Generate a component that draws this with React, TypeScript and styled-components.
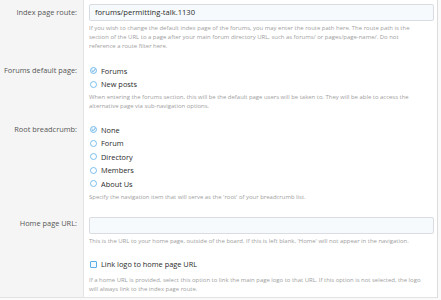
import React from "react";
import styled, { createGlobalStyle } from "styled-components";

const Global = createGlobalStyle`
  html, body { margin: 0; padding: 0; background: #fafafa; }
  body { font-family: "Open Sans", "Noto Sans", sans-serif; }
`;

const Page = styled.div`
  width: 441px;
  height: 300px;
  overflow: hidden;
  background: #fafafa;
`;

const Form = styled.div`
  width: 438px;
  border-right: 1px solid #dcdcdc;
  box-sizing: border-box;
  background: #fff;
`;

const Row = styled.div<{ $last?: boolean }>`
  display: flex;
  align-items: stretch;
  ${(p) => (p.$last ? "border-bottom: 1px solid #e2e2e2;" : "")}
`;

const LabelCell = styled.div<{ $pt: number }>`
  width: 84px;
  flex: none;
  box-sizing: border-box;
  background: #f5f5f5;
  border-right: 1px solid #e4e4e4;
  padding: ${(p) => p.$pt}px 6px 0 0;
  text-align: right;
  font-size: 7.4px;
  line-height: 13.5px;
  color: #555;
  white-space: nowrap;
`;

const Content = styled.div<{ $pt: number; $pb: number }>`
  flex: 1;
  padding: ${(p) => p.$pt}px 3px ${(p) => p.$pb}px 5px;
  min-width: 0;
`;

const Input = styled.div`
  height: 17px;
  box-sizing: border-box;
  border: 1px solid #d9dde2;
  border-radius: 2px;
  background: #f7fafd;
  padding: 0 5px;
  font-size: 7.6px;
  line-height: 15px;
  color: #2a2a2a;
`;

const Explain = styled.div<{ $mt: number }>`
  margin-top: ${(p) => p.$mt}px;
  font-size: 5.95px;
  line-height: 9px;
  color: #a0a0a0;
  white-space: nowrap;
`;

const Choice = styled.div`
  display: flex;
  align-items: center;
  height: 13.5px;
  font-size: 7.4px;
  color: #2a2a2a;
  gap: 4px;
`;

const RadioMark = styled.span`
  width: 7px;
  height: 7px;
  flex: none;
  display: inline-flex;
  margin-left: 1px;
`;

const BoxMark = styled.span`
  width: 7px;
  height: 7px;
  box-sizing: border-box;
  border: 1px solid #5aaee8;
  border-radius: 1px;
  background: #f4f9fd;
  flex: none;
  margin-left: 1px;
`;

const Radio = ({ checked }: { checked?: boolean }) => (
  <RadioMark>
    <svg width="7" height="7" viewBox="0 0 14 14">
      <circle cx="7" cy="7" r="6" fill={checked ? "#eef6fd" : "#fff"} stroke="#5aaee8" strokeWidth="1.6" />
      {checked && (
        <path d="M4 7.3 L6.2 9.4 L10 5" fill="none" stroke="#3d9be0" strokeWidth="1.6" strokeLinecap="round" strokeLinejoin="round" />
      )}
    </svg>
  </RadioMark>
);

export default function App() {
  return (
    <Page>
      <Global />
      <Form>
        <Row>
          <LabelCell $pt={6}>Index page route:</LabelCell>
          <Content $pt={4} $pb={6}>
            <Input>forums/permitting-talk.1130</Input>
            <Explain $mt={3}>
              If you wish to change the default index page of the forums, you may enter the route path here. The route path is the
              <br />
              section of the URL to a page after your main forum directory URL, such as forums/ or pages/page-name/. Do not
              <br />
              reference a route filter here.
            </Explain>
          </Content>
        </Row>
        <Row>
          <LabelCell $pt={7}>Forums default page:</LabelCell>
          <Content $pt={7} $pb={6}>
            <Choice><Radio checked />Forums</Choice>
            <Choice><Radio />New posts</Choice>
            <Explain $mt={2}>
              When entering the forums section, this will be the default page users will be taken to. They will be able to access the
              <br />
              alternative page via sub-navigation options.
            </Explain>
          </Content>
        </Row>
        <Row>
          <LabelCell $pt={6}>Root breadcrumb:</LabelCell>
          <Content $pt={6} $pb={9}>
            <Choice><Radio checked />None</Choice>
            <Choice><Radio />Forum</Choice>
            <Choice><Radio />Directory</Choice>
            <Choice><Radio />Members</Choice>
            <Choice><Radio />About Us</Choice>
            <Explain $mt={2}>Specify the navigation item that will serve as the 'root' of your breadcrumb list.</Explain>
          </Content>
        </Row>
        <Row>
          <LabelCell $pt={6}>Home page URL:</LabelCell>
          <Content $pt={6} $pb={6}>
            <Input />
            <Explain $mt={3}>
              This is the URL to your home page, outside of the board. If this is left blank, 'Home' will not appear in the navigation.
            </Explain>
          </Content>
        </Row>
        <Row $last>
          <LabelCell $pt={6} />
          <Content $pt={6} $pb={3}>
            <Choice><BoxMark />Link logo to home page URL</Choice>
            <Explain $mt={5}>
              If a home URL is provided, select this option to link the main page logo to that URL. If this option is not selected, the logo
              <br />
              will always link to the index page route.
            </Explain>
          </Content>
        </Row>
      </Form>
    </Page>
  );
}
